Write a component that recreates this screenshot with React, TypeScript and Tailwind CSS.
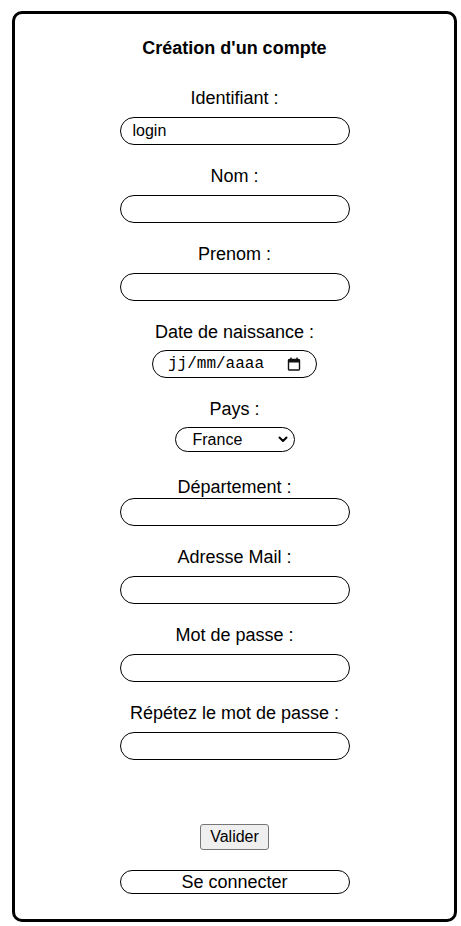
export default function App() {
  const font = { fontFamily: '"Liberation Sans", Arial, sans-serif' };

  return (
    <div className="bg-white min-h-[926px] pt-[11px] pl-3" style={font}>
      <div className="w-[445px] h-[911px] border-[3px] border-black rounded-[10px] flex flex-col items-center pt-[24px] text-black">
        <h1 className="text-[18px] leading-[21px] font-bold">Création d'un compte</h1>

        <Field label="Identifiant :" first value="login" />
        <Field label="Nom :" />
        <Field label="Prenom :" />

        <label className="mt-[21px] text-[18px] leading-[21px]">Date de naissance :</label>
        <div className="mt-[7px] w-[165px] h-[28px] border border-black rounded-full flex items-center pl-[15px] pr-[15px]">
          <span className="text-[16px] leading-none" style={{ fontFamily: '"Liberation Mono", "DejaVu Sans Mono", monospace' }}>
            jj/mm/aaaa
          </span>
          <svg className="ml-auto" width="14" height="14" viewBox="0 0 14 14" fill="none">
            <rect x="1.5" y="2.5" width="11" height="10.5" rx="1" stroke="#111" strokeWidth="1.4" />
            <rect x="1.5" y="2.5" width="11" height="3" fill="#111" />
            <line x1="4" y1="0.5" x2="4" y2="3" stroke="#111" strokeWidth="1.4" />
            <line x1="10" y1="0.5" x2="10" y2="3" stroke="#111" strokeWidth="1.4" />
          </svg>
        </div>

        <label className="mt-[21px] text-[18px] leading-[21px]">Pays :</label>
        <div className="mt-[7px] w-[120px] h-[25px] border border-black rounded-full flex items-center pl-[17px] pr-[6px]">
          <span className="text-[16px] leading-none">France</span>
          <svg className="ml-auto" width="10" height="7" viewBox="0 0 10 7" fill="none">
            <path d="M1.5 1.5 L5 5 L8.5 1.5" stroke="#000" strokeWidth="2" strokeLinecap="round" strokeLinejoin="round" />
          </svg>
        </div>

        <label className="mt-[25px] text-[18px] leading-[21px]">Département :</label>
        <input className="w-[230px] h-[28px] border border-black rounded-full pl-3 text-[16px] outline-none" />

        <Field label="Adresse Mail :" />
        <Field label="Mot de passe :" />
        <Field label="Répétez le mot de passe :" />

        <button
          type="button"
          className="mt-[64px] w-[69px] h-[26px] bg-[#efefef] border border-[#767676] rounded-[3px] text-[16px] leading-none"
        >
          Valider
        </button>

        <button
          type="button"
          className="mt-[20px] w-[230px] h-[24px] bg-white border border-black rounded-full text-[18px] leading-none"
        >
          Se connecter
        </button>
      </div>
    </div>
  );
}

function Field({ label, value, first }: { label: string; value?: string; first?: boolean }) {
  return (
    <>
      <label className={`${first ? "mt-[29px]" : "mt-[21px]"} text-[18px] leading-[21px]`}>{label}</label>
      <input
        defaultValue={value}
        className="mt-2 w-[230px] h-[28px] border border-black rounded-full pl-3 text-[16px] outline-none"
        style={{ fontFamily: '"Liberation Sans", Arial, sans-serif' }}
      />
    </>
  );
}
